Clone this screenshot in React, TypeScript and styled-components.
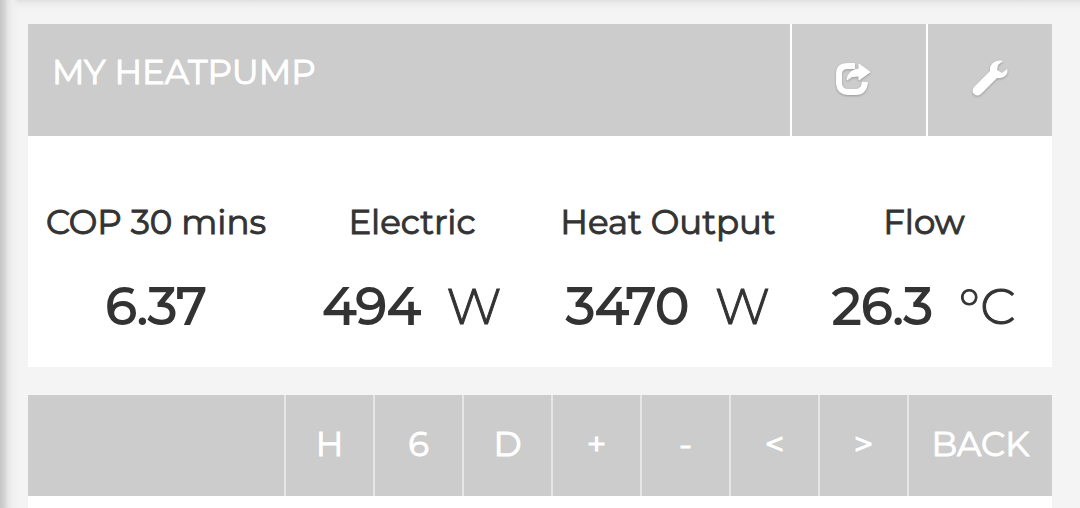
import React from "react";
import styled, { createGlobalStyle } from "styled-components";

const GlobalStyle = createGlobalStyle`
  *, *::before, *::after { box-sizing: border-box; }
  html, body { margin: 0; padding: 0; }
  body {
    background: #f4f4f4;
    color: #333;
    font-family: Montserrat, Inter, sans-serif;
  }
`;

const Page = styled.main`
  display: flex;
  flex-direction: column;
  gap: 28px;
  min-height: 100vh;
  padding: 24px 28px 0;
  background:
    linear-gradient(to right, #c6c6c6 0, #d2d2d2 4px, #e6e6e6 8px, #f0f0f0 13px, rgba(244, 244, 244, 0) 19px) no-repeat,
    linear-gradient(to bottom, #dedede 0, #ebebeb 3px, #f2f2f2 8px, #f4f4f4 13px);
`;

const Card = styled.section<{ $fill?: boolean }>`
  display: flex;
  flex-direction: column;
  flex: ${(p) => (p.$fill ? "1 0 auto" : "0 0 auto")};
  background: #fff;
`;

const Header = styled.header`
  display: flex;
  height: 112px;
  background: #ccc;
  color: #fff;
`;

const Title = styled.h1`
  flex: 1;
  margin: 0;
  padding: 24px;
  font-size: 34px;
  line-height: 48px;
  font-weight: 400;
  -webkit-text-stroke: 1px currentColor;
`;

const IconButton = styled.button<{ $width: number }>`
  display: flex;
  align-items: center;
  justify-content: center;
  width: ${(p) => p.$width}px;
  padding: 0 ${(p) => (p.$width > 130 ? 12 : 0)}px 4px 0;
  border: 0;
  border-left: 2px solid #fff;
  background: #ccc;
  color: #fff;
  cursor: pointer;

  svg {
    filter: drop-shadow(0 1px 1px rgba(0, 0, 0, 0.25));
  }
`;

const Readings = styled.dl`
  display: grid;
  grid-template-columns: repeat(4, 1fr);
  margin: 0;
  padding: 64px 0 29px;
  text-align: center;
`;

const Label = styled.dt`
  font-size: 34px;
  line-height: 44px;
  font-weight: 400;
  -webkit-text-stroke: 1px currentColor;
  white-space: nowrap;
`;

const Value = styled.dd`
  display: flex;
  align-items: baseline;
  justify-content: center;
  gap: 26px;
  height: 64px;
  margin: 30px 0 0;
  font-size: 51px;
  line-height: 64px;
  font-weight: 400;
  -webkit-text-stroke: 2px currentColor;
`;

const Unit = styled.span`
  font-size: 50px;
  font-weight: 300;
  -webkit-text-stroke: 1px currentColor;
`;

const Toolbar = styled.nav`
  display: grid;
  grid-template-columns: 1fr repeat(7, 89px) 145px;
  height: 101px;
  background: #ccc;

  &::before {
    content: "";
  }
`;

const ToolButton = styled.button`
  padding: 0 0 4px;
  border: 0;
  border-left: 2px solid #e6e6e6;
  background: #ccc;
  color: #fff;
  font-family: inherit;
  font-size: 34px;
  line-height: 44px;
  font-weight: 400;
  -webkit-text-stroke: 1px currentColor;
  cursor: pointer;
`;

const readings = [
  { label: "COP 30 mins", value: "6.37" },
  { label: "Electric", value: "494", unit: "W" },
  { label: "Heat Output", value: "3470", unit: "W" },
  { label: "Flow", value: "26.3", unit: "°C" },
];

const tools = ["H", "6", "D", "+", "-", "<", ">", "BACK"];

const ShareIcon = () => (
  <svg width="36" height="36" viewBox="0 0 36 36" aria-hidden="true">
    <path
      d="M20 6H13Q4 6 4 14V24Q5 32 13 32H21Q29 32 30 22"
      fill="none"
      stroke="currentColor"
      strokeWidth="6"
    />
    <path
      d="M24 4L35 12L24 20V16Q17 15 12 20Q13 10 24 9Z"
      fill="currentColor"
      stroke="currentColor"
      strokeLinejoin="round"
    />
  </svg>
);

const WrenchIcon = () => (
  <svg width="36" height="36" viewBox="0 0 36 36" aria-hidden="true">
    <path
      d="M31 1C24 -1 17 4 18 11L2 27Q-1 31 2 34Q5 37 9 34L25 18C32 19 37 14 35 9L30 13L25 10L26 5Z"
      fill="currentColor"
    />
  </svg>
);

export default function App() {
  return (
    <>
      <GlobalStyle />
      <Page>
        <Card>
          <Header>
            <Title>MY HEATPUMP</Title>
            <IconButton $width={136} type="button" aria-label="Share">
              <ShareIcon />
            </IconButton>
            <IconButton $width={126} type="button" aria-label="Settings">
              <WrenchIcon />
            </IconButton>
          </Header>
          <Readings>
            {readings.map(({ label, value, unit }) => (
              <div key={label}>
                <Label>{label}</Label>
                <Value>
                  <span>{value}</span>
                  {unit && <Unit>{unit}</Unit>}
                </Value>
              </div>
            ))}
          </Readings>
        </Card>
        <Card $fill>
          <Toolbar aria-label="Chart range">
            {tools.map((tool) => (
              <ToolButton key={tool} type="button">
                {tool}
              </ToolButton>
            ))}
          </Toolbar>
        </Card>
      </Page>
    </>
  );
}
